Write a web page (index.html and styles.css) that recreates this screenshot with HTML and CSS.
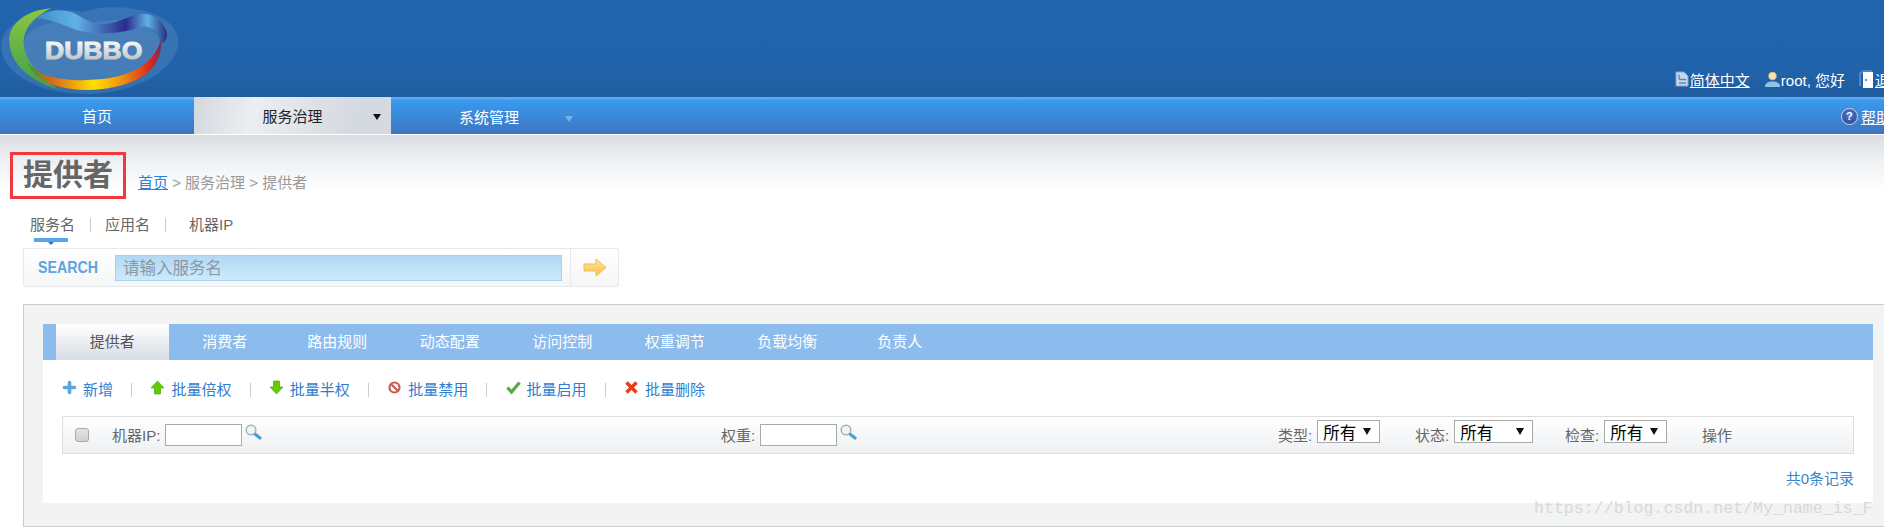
FILE: index.html
```html
<!DOCTYPE html>
<html lang="zh-CN">
<head>
    <meta charset="UTF-8">
    <meta name="viewport" content="width=device-width, initial-scale=1.0">
    <title>提供者</title>
    <link rel="stylesheet" href="styles.css">
</head>
<body>
<div class="page">
    <header class="top">
        <svg class="logo" viewBox="0 0 570 300" aria-label="Dubbo">
            <defs>
                <linearGradient id="rainbow" x1="0" y1="0" x2="1" y2="0">
                    <stop offset="0" stop-color="#2f9a3c"/>
                    <stop offset="0.18" stop-color="#d9661a"/>
                    <stop offset="0.5" stop-color="#ffe000"/>
                    <stop offset="0.72" stop-color="#f08a12"/>
                    <stop offset="0.92" stop-color="#d9281b"/>
                    <stop offset="1" stop-color="#7a2a5a"/>
                </linearGradient>
                <linearGradient id="band" x1="0" y1="0" x2="1" y2="0">
                    <stop offset="0" stop-color="#3f8fc8"/>
                    <stop offset="0.3" stop-color="#5fb2e4"/>
                    <stop offset="0.68" stop-color="#2a2a8c"/>
                    <stop offset="0.85" stop-color="#5fb2e4"/>
                    <stop offset="1" stop-color="#23307f"/>
                </linearGradient>
                <linearGradient id="green" x1="0" y1="0" x2="0" y2="1">
                    <stop offset="0" stop-color="#8cc63f"/>
                    <stop offset="1" stop-color="#3f9f4f"/>
                </linearGradient>
                <linearGradient id="metal" x1="0" y1="0" x2="0" y2="1">
                    <stop offset="0.2" stop-color="#f4f4f4"/>
                    <stop offset="1" stop-color="#b4b8bc"/>
                </linearGradient>
                <linearGradient id="goldarrow" x1="0" y1="0" x2="0" y2="1">
                    <stop offset="0" stop-color="#ffe79a"/>
                    <stop offset="1" stop-color="#fbc04a"/>
                </linearGradient>
            </defs>
            <path fill="#fff" fill-opacity="0.1" d="M4 130C12 60 130 14 250 36C330 6 510 20 534 110C546 190 440 272 280 282C120 288-4 220 4 130Z"/>
            <path fill="#fff" fill-opacity="0.08" d="M70 140C70 70 190 50 270 70C350 50 470 60 480 130C480 200 390 250 270 250C160 250 70 210 70 140Z"/>
            <path fill="url(#green)" d="M155 25C80 30 25 70 28 125C30 190 90 245 175 268C120 225 80 190 72 140C65 90 100 50 155 25Z"/>
            <path fill="url(#rainbow)" d="M82 185C120 240 220 245 300 238C380 230 460 200 482 120C490 180 450 240 340 262C260 278 170 270 120 235C100 220 88 205 82 185Z"/>
            <path fill="url(#band)" d="M110 55C150 20 210 26 250 55C300 85 340 70 390 50C430 32 480 40 500 95C505 110 495 130 482 130C480 100 465 85 430 78C380 100 290 108 230 90C180 72 140 55 110 55Z"/>
            <text class="logo-text" x="135" y="178" textLength="292" lengthAdjust="spacingAndGlyphs" fill="url(#metal)" stroke="url(#metal)" stroke-width="3">DUBBO</text>
        </svg>
        <div class="user-links">
            <svg class="ico-page" viewBox="0 0 14 16"><path fill="#c9d8ea" stroke="#7fa3cf" d="M1 1h8l4 4v10H1z"/><path fill="none" stroke="#5f86ba" stroke-width="1.4" d="M4 3.500v5M4 8.500h7M4 12h7"/></svg>
            <a class="lnk" href="#">简体中文</a>
            <svg class="ico-user" viewBox="0 0 15 16"><path fill="#8fc4e8" d="M0 16c0-4 3-5.500 7.500-5.500S15 12 15 16z"/><circle cx="7.500" cy="5" r="4" fill="#f2e6b0" stroke="#a89a60" stroke-width="0.6"/></svg>
            <span class="hello">root, 您好</span>
            <svg class="ico-door" viewBox="0 0 15 18"><path fill="#4f86c6" d="M0 3l4-3h9v2H5L2 4v12H0z"/><path fill="#fff" d="M4 2h10v16H4z"/><circle cx="7" cy="10" r="1" fill="#2a68ad"/></svg>
            <a class="lnk" href="#">退出</a>
        </div>
    </header>

    <nav class="nav">
        <a class="nav-item" href="#">首页</a>
        <a class="nav-item on" href="#">服务治理<i class="nav-arrow"></i></a>
        <a class="nav-item sys" href="#">系统管理<i class="nav-arrow"></i></a>
        <div class="help">
            <span class="help-ico">?</span>
            <a class="lnk" href="#">帮助</a>
        </div>
    </nav>

    <main class="content">
        <div class="title-row">
            <h1 class="title">提供者</h1>
            <div class="crumb"><a href="#">首页</a> &gt; 服务治理 &gt; 提供者</div>
        </div>

        <div class="sub-tabs">
            <span class="sub-tab on">服务名</span>
            <i class="sub-sep"></i>
            <span class="sub-tab">应用名</span>
            <i class="sub-sep"></i>
            <span class="sub-tab last">机器IP</span>
        </div>

        <form class="search">
            <span class="search-label"><b>SEARCH</b></span>
            <input class="search-input" type="text" placeholder="请输入服务名">
            <span class="search-go">
                <svg viewBox="0 0 24 19" width="24" height="19"><path fill="url(#goldarrow)" stroke="#e8bc5c" d="M1 6h12V1l10 8.500L13 18v-5H1z"/></svg>
            </span>
        </form>

        <section class="panel">
            <div class="tabs">
                <a class="tab on" href="#">提供者</a>
                <a class="tab" href="#">消费者</a>
                <a class="tab" href="#">路由规则</a>
                <a class="tab" href="#">动态配置</a>
                <a class="tab" href="#">访问控制</a>
                <a class="tab" href="#">权重调节</a>
                <a class="tab" href="#">负载均衡</a>
                <a class="tab" href="#">负责人</a>
            </div>
            <div class="panel-body">
                <div class="tools">
                    <a class="tool" href="#"><svg viewBox="0 0 15 15"><path fill="none" stroke="#5aa5dc" stroke-width="3.600" stroke-linecap="round" d="M7.500 2.500v10M2.500 7.500h10"/></svg>新增</a>
                    <i class="tool-sep"></i>
                    <a class="tool" href="#"><svg viewBox="0 0 15 15"><path fill="#62cc00" stroke="#3c9a00" stroke-width="0.6" d="M7.500 1L14 8h-3.500v6h-6V8H1z"/></svg>批量倍权</a>
                    <i class="tool-sep"></i>
                    <a class="tool" href="#"><svg viewBox="0 0 15 15"><path fill="#62cc00" stroke="#3c9a00" stroke-width="0.6" d="M4.500 1h6v6H14l-6.500 7L1 7h3.500z"/></svg>批量半权</a>
                    <i class="tool-sep"></i>
                    <a class="tool" href="#"><svg viewBox="0 0 15 15"><circle cx="7.500" cy="7.500" r="5" fill="#fff" stroke="#d6554a" stroke-width="2.200"/><path stroke="#d6554a" stroke-width="2.200" d="M4 4l7 7"/></svg>批量禁用</a>
                    <i class="tool-sep"></i>
                    <a class="tool" href="#"><svg viewBox="0 0 15 15"><path fill="none" stroke="#55a844" stroke-width="3.200" d="M1.500 7.500l4 4.500L13.500 2.500"/></svg>批量启用</a>
                    <i class="tool-sep"></i>
                    <a class="tool" href="#"><svg viewBox="0 0 15 15"><path fill="none" stroke="#e0401a" stroke-width="3.500" d="M2.500 2.500l10 10M12.500 2.500l-10 10"/></svg>批量删除</a>
                </div>

                <div class="filter">
                    <div class="cell chk"><input type="checkbox"></div>
                    <div class="cell">
                        <label>机器IP:</label>
                        <input class="filter-input ip" type="text">
                        <svg class="glass" viewBox="0 0 17 16"><circle cx="6" cy="6" r="4.800" fill="#eef5f6" stroke="#a3b6bb" stroke-width="1.500"/><path stroke="#4b9fd2" stroke-width="3.200" stroke-linecap="round" d="M10.500 10.500L15 14"/></svg>
                    </div>
                    <div class="cell">
                        <label>权重:</label>
                        <input class="filter-input wt" type="text">
                        <svg class="glass" viewBox="0 0 17 16"><circle cx="6" cy="6" r="4.800" fill="#eef5f6" stroke="#a3b6bb" stroke-width="1.500"/><path stroke="#4b9fd2" stroke-width="3.200" stroke-linecap="round" d="M10.500 10.500L15 14"/></svg>
                    </div>
                    <div class="cell">
                        <label>类型:</label>
                        <span class="pick"><select><option>所有</option></select></span>
                    </div>
                    <div class="cell">
                        <label>状态:</label>
                        <span class="pick wide"><select><option>所有</option></select></span>
                    </div>
                    <div class="cell">
                        <label>检查:</label>
                        <span class="pick"><select><option>所有</option></select></span>
                    </div>
                    <div class="cell"><label>操作</label></div>
                </div>

                <div class="total"><a href="#">共0条记录</a></div>
            </div>
        </section>
    </main>
    <div class="watermark">https://blog.csdn.net/My_name_is_F</div>
</div>
</body>
</html>
```

FILE: styles.css
```css
body {
    margin: 0;
    overflow: hidden;
    height: 530px;
    font-family: "Liberation Sans", "Noto Sans CJK SC", sans-serif;
    font-size: 15px;
    color: #666;
    background-color: #fff;
}

a {
    text-decoration: none;
}

/* page runs past the right edge of the window */
.page {
    position: relative;
    width: 1905px;
    height: 530px;
    overflow: hidden;
}

/* header */
.top {
    display: flex;
    justify-content: space-between;
    align-items: flex-end;
    height: 97px;
    background: linear-gradient(#2265ae, #2163aa 70%, #1f5ca0);
}

.logo {
    align-self: flex-start;
    width: 190px;
    height: 100px;
}

.logo-text {
    font-size: 74px;
    font-weight: bold;
}

.user-links {
    display: flex;
    align-items: center;
    height: 20px;
    padding-bottom: 8px;
    color: #fff;
}

.lnk {
    color: #fff;
    text-decoration: underline;
}

.ico-page {
    width: 14px;
    height: 16px;
    margin-right: 1px;
}

.ico-user {
    width: 15px;
    height: 16px;
    margin-left: 15px;
}

.hello {
    margin-left: 1px;
}

.ico-door {
    width: 15px;
    height: 18px;
    margin-left: 14px;
    margin-right: 1px;
}

/* main menu */
.nav {
    display: flex;
    height: 37px;
    border-bottom: 1px solid #fff;
    background: linear-gradient(#5aa8ee 0, #5aa8ee 2px, #399bef 3px, #3d74bf 100%);
}

.nav-item {
    position: relative;
    width: 194px;
    line-height: 40px;
    text-align: center;
    color: #fff;
}

.nav-item.on {
    width: 197px;
    color: #222;
    background: linear-gradient(100deg, #d4d8de, #eceef1 30%, #d5d9e0 80%);
}

.nav-item.sys {
    width: 196px;
    line-height: 42px;
}

.nav-arrow {
    position: absolute;
    top: 17px;
    right: 10px;
    border: 4px solid transparent;
    border-top: 6px solid #111;
    border-bottom: 0;
}

.sys .nav-arrow {
    top: 19px;
    right: 14px;
    border-top-color: #7ab0e6;
}

.help {
    display: flex;
    align-items: center;
    margin-left: auto;
    padding-right: 14px;
    padding-top: 2px;
    color: #fff;
}

.help-ico {
    width: 17px;
    height: 17px;
    margin-right: 3px;
    border-radius: 50%;
    border: 1px solid #cfd6e4;
    box-sizing: border-box;
    background: radial-gradient(circle at 50% 35%, #5577cc, #26409a);
    font-size: 11px;
    font-weight: bold;
    line-height: 15px;
    text-align: center;
}

/* content */
.content {
    height: 395px;
    padding-top: 17px;
    box-sizing: border-box;
    background: linear-gradient(#d9dde2 0, #eceef1 22px, #fff 55px);
}

.title-row {
    display: flex;
    align-items: flex-end;
    margin-left: 10px;
}

.title {
    width: 116px;
    height: 47px;
    margin: 0;
    padding-left: 10px;
    box-sizing: border-box;
    border: 3px solid #f2383d;
    font-size: 30px;
    font-weight: bold;
    line-height: 40px;
    color: #666;
}

.crumb {
    margin-left: 12px;
    margin-bottom: 6px;
    line-height: 20px;
    color: #999;
}

.crumb a {
    color: #2e7fd6;
    text-decoration: underline;
}

.sub-tabs {
    display: flex;
    align-items: center;
    gap: 14.500px;
    height: 20px;
    margin: 16px 0 0 30px;
    color: #666;
}

.sub-tab {
    position: relative;
    line-height: 20px;
}

.sub-tab.on::after {
    content: "";
    position: absolute;
    top: 23px;
    left: 4px;
    width: 34px;
    height: 4px;
    background-color: #57a5e8;
}

.sub-tab.on::before {
    content: "";
    position: absolute;
    top: 27px;
    left: 18px;
    border: 3px solid transparent;
    border-top: 3px solid #3a6fa8;
    border-bottom: 0;
}

.sub-tab.last {
    margin-left: 9px;
}

.sub-sep {
    width: 1px;
    height: 14px;
    background-color: #ccc;
}

.search {
    display: flex;
    align-items: center;
    width: 596px;
    height: 39px;
    margin: 13px 0 0 23px;
    box-sizing: border-box;
    border: 1px solid #e6e8ea;
    border-radius: 2px;
    background: linear-gradient(#fff, #f5f6f6);
}

.search-label {
    width: 60px;
    margin-left: 14px;
    margin-right: 17px;
    color: #5ba3e3;
}

.search-label b {
    display: block;
    font-size: 16.500px;
    white-space: nowrap;
    transform: scaleX(0.86);
    transform-origin: left center;
}

.search-input {
    width: 447px;
    height: 26px;
    padding: 2px 0 0 7px;
    box-sizing: border-box;
    border: 1px solid #a9d2ea;
    background: linear-gradient(#b3d8f3, #cbeafc);
    font-family: inherit;
    font-size: 16.500px;
}

.search-input::placeholder {
    color: #8b98a2;
}

.search-go {
    display: flex;
    align-items: center;
    align-self: stretch;
    width: 48px;
    margin-left: 8px;
    padding-left: 12px;
    box-sizing: border-box;
    border-left: 1px solid #e6e8ea;
}

/* panel */
.panel {
    margin: 17px 0 0 23px;
    padding: 19px 32px 23px 19px;
    border-top: 1px solid #ccc;
    border-bottom: 1px solid #ccc;
    border-left: 1px solid #ccc;
    background-color: #f2f4f4;
}

.tabs {
    display: flex;
    height: 36px;
    padding-left: 13px;
    background-color: #8cbbed;
}

.tab {
    width: 112.500px;
    line-height: 36px;
    text-align: center;
    color: #fff;
}

.tab.on {
    color: #555;
    background: linear-gradient(#fff, #d8dce4);
}

.panel-body {
    background-color: #fff;
}

.tools {
    display: flex;
    align-items: center;
    gap: 18.200px;
    height: 56px;
    padding: 1px 0 0 19px;
    box-sizing: border-box;
}

.tool {
    display: flex;
    align-items: center;
    gap: 6px;
    color: #2f7ed0;
}

.tool svg {
    width: 15px;
    height: 15px;
    margin-top: -3px;
}

.tool-sep {
    width: 1px;
    height: 14px;
    margin-top: 3px;
    background-color: #ccc;
}

.filter {
    display: grid;
    grid-template-columns: 49px 609px 557px 137px 150px 137px 1fr;
    height: 38px;
    margin: 0 19px;
    box-sizing: border-box;
    border: 1px solid #ddd;
    background: linear-gradient(#fff, #eef0f2);
}

.cell {
    display: flex;
    align-items: center;
    gap: 5px;
}

.cell label {
    margin-top: -2px;
}

.chk {
    padding-left: 12px;
}

.chk input {
    width: 14px;
    height: 14px;
    margin: 0;
    appearance: none;
    border: 1px solid #aaa;
    border-radius: 3px;
    background: linear-gradient(#e4e4e4, #cfcfcf);
}

.filter-input {
    height: 22px;
    padding: 0;
    box-sizing: border-box;
    border: 1px solid #aaa;
    background-color: #fff;
}

.ip,
.wt {
    width: 77px;
}

.glass {
    width: 17px;
    height: 16px;
    margin-left: -2px;
    margin-top: -6px;
}

.pick {
    position: relative;
    display: block;
    align-self: flex-start;
    width: 63px;
    height: 23px;
    margin-top: 3px;
}

.pick.wide {
    width: 79px;
}

.pick select {
    width: 100%;
    height: 100%;
    padding: 3px 0 0 5px;
    box-sizing: border-box;
    border: 1px solid #aaa;
    border-radius: 0;
    appearance: none;
    background-color: #fff;
    font-family: inherit;
    font-size: 16.500px;
    color: #000;
}

.pick::after {
    content: "";
    position: absolute;
    top: 8px;
    right: 9px;
    border: 4px solid transparent;
    border-top: 7px solid #111;
    border-bottom: 0;
}

.total {
    display: flex;
    justify-content: flex-end;
    align-items: center;
    height: 49px;
    padding-bottom: 3px;
    margin-right: 19px;
    box-sizing: border-box;
}

.total a {
    color: #3a85c8;
}

/* blog watermark over the screenshot */
.watermark {
    position: absolute;
    top: 500px;
    left: 1534px;
    font-family: "Liberation Mono", monospace;
    font-size: 16.600px;
    line-height: 18px;
    color: #d8d9d9;
}
```
